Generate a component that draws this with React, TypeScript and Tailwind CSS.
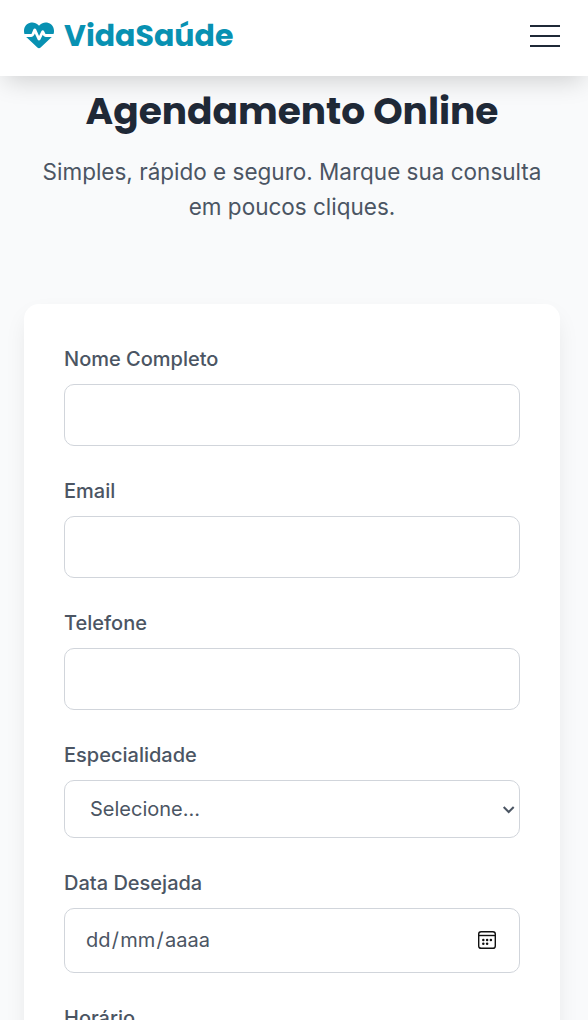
import type { ReactNode } from "react";
import { FaHeartPulse } from "react-icons/fa6";

const control = "w-full rounded-[10px] border border-[#d1d5db] bg-white text-[20px] text-[#4b5563] outline-none";

function Field({ label, children }: { label: string; children: ReactNode }) {
  return (
    <label className="flex flex-col">
      <span className="mb-[10px] text-[20px] leading-[30px] font-medium text-[#4b5563]">{label}</span>
      {children}
    </label>
  );
}

function CalendarIcon() {
  return (
    <svg width="20" height="20" viewBox="0 0 20 20" fill="none">
      <rect x="1.7" y="1.7" width="16.6" height="16.6" rx="2.4" stroke="#111" strokeWidth="1.4" />
      <path d="M2 5.5h16" stroke="#111" strokeWidth="1.4" />
      <g fill="#111">
        <circle cx="6.3" cy="10" r="1.25" />
        <circle cx="10.1" cy="10" r="1.25" />
        <circle cx="13.9" cy="10" r="1.25" />
        <circle cx="6.3" cy="13.7" r="1.25" />
        <circle cx="10.1" cy="13.7" r="1.25" />
      </g>
    </svg>
  );
}

export default function App() {
  return (
    <div className="h-[1020px] overflow-hidden bg-[#f9fafb] font-['Inter',sans-serif]">
      <header className="relative z-10 flex h-[76px] items-center justify-between bg-white px-6 pr-7 pb-1 shadow-[0_10px_25px_-5px_rgba(0,0,0,0.17)]">
        <a className="flex items-center gap-[10px] text-[#0891b2]">
          <FaHeartPulse size={30} className="mb-[2px]" />
          <span className="mb-[2px] text-[30px] leading-[45px] font-bold whitespace-nowrap font-['Poppins','Inter',sans-serif]">VidaSaúde</span>
        </a>
        <button aria-label="Menu" className="flex w-[30px] flex-col gap-2">
          <span className="h-[2px] bg-[#1f2937]" />
          <span className="h-[2px] bg-[#1f2937]" />
          <span className="h-[2px] bg-[#1f2937]" />
        </button>
      </header>
      <main className="px-6 pr-7 pt-3">
        <h1 className="text-center text-[37.5px] leading-[47px] font-bold whitespace-nowrap text-[#1f2937] font-['Poppins','Inter',sans-serif]">Agendamento Online</h1>
        <p className="mt-[19px] text-center text-[22.5px] leading-[35px] text-[#4b5563]">
          Simples, rápido e seguro. Marque sua consulta<br />em poucos cliques.
        </p>
        <form className="mt-20 flex h-[900px] flex-col gap-[30px] rounded-[15px] bg-white px-10 pt-10 shadow-[0_10px_25px_-5px_rgba(0,0,0,0.1)]">
          <Field label="Nome Completo"><input className={`${control} h-[62px] px-5`} /></Field>
          <Field label="Email"><input className={`${control} h-[62px] px-5`} /></Field>
          <Field label="Telefone"><input className={`${control} h-[62px] px-5`} /></Field>
          <Field label="Especialidade">
            <div className="grid items-center">
              <select className={`${control} col-start-1 row-start-1 h-[58px] appearance-none px-[25px]`}><option>Selecione...</option></select>
              <svg className="pointer-events-none col-start-1 row-start-1 mt-px mr-[5px] justify-self-end" width="13" height="10" viewBox="0 0 13 10" fill="none">
                <path d="M1.7 2l5 5 5-5" stroke="#4b5563" strokeWidth="2" />
              </svg>
            </div>
          </Field>
          <Field label="Data Desejada">
            <div className={`${control} flex h-[65px] items-center justify-between pr-[22px] pb-[2px] pl-[21px]`}>
              <span className="flex gap-[1.25px]"><span>dd</span><span>/</span><span>mm</span><span>/</span><span>aaaa</span></span>
              <CalendarIcon />
            </div>
          </Field>
          <Field label="Horário"><input className={`${control} h-[62px] px-5`} /></Field>
        </form>
      </main>
    </div>
  );
}
